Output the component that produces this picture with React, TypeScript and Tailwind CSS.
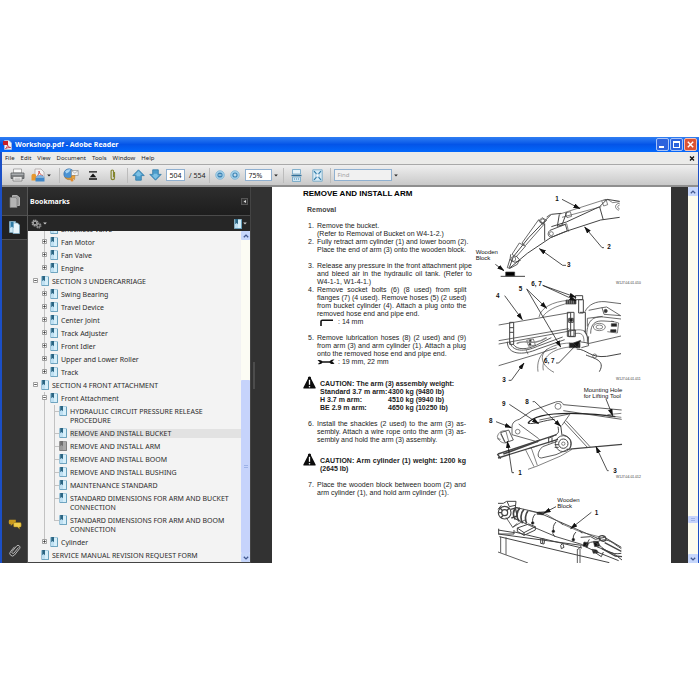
import type { ReactNode } from 'react';
import clsx from 'clsx';

type Row = {
  level: 0 | 1 | 2;
  label: string;
  state?: 'open' | 'closed';
  selected?: boolean;
  visited?: boolean;
  last?: boolean;
};

const rows: Row[] = [
  { level: 1, label: 'Shockless Valve' },
  { level: 1, label: 'Fan Motor', state: 'closed' },
  { level: 1, label: 'Fan Valve', state: 'closed' },
  { level: 1, label: 'Engine', state: 'closed', last: true },
  { level: 0, label: 'SECTION 3 UNDERCARRIAGE', state: 'open' },
  { level: 1, label: 'Swing Bearing', state: 'closed' },
  { level: 1, label: 'Travel Device', state: 'closed' },
  { level: 1, label: 'Center Joint', state: 'closed' },
  { level: 1, label: 'Track Adjuster', state: 'closed' },
  { level: 1, label: 'Front Idler', state: 'closed' },
  { level: 1, label: 'Upper and Lower Roller', state: 'closed' },
  { level: 1, label: 'Track', state: 'closed', last: true },
  { level: 0, label: 'SECTION 4 FRONT ATTACHMENT', state: 'open' },
  { level: 1, label: 'Front Attachment', state: 'open' },
  { level: 2, label: 'HYDRAULIC CIRCUIT PRESSURE RELEASE PROCEDURE' },
  { level: 2, label: 'REMOVE AND INSTALL BUCKET', selected: true },
  { level: 2, label: 'REMOVE AND INSTALL ARM', visited: true },
  { level: 2, label: 'REMOVE AND INSTALL BOOM' },
  { level: 2, label: 'REMOVE AND INSTALL BUSHING' },
  { level: 2, label: 'MAINTENANCE STANDARD' },
  { level: 2, label: 'STANDARD DIMENSIONS FOR ARM AND BUCKET CONNECTION' },
  { level: 2, label: 'STANDARD DIMENSIONS FOR ARM AND BOOM CONNECTION', last: true },
  { level: 1, label: 'Cylinder', state: 'closed', last: true },
  { level: 0, label: 'SERVICE MANUAL REVISION REQUEST FORM' },
];

const menus = ['File', 'Edit', 'View', 'Document', 'Tools', 'Window', 'Help'];

/* ---------- icons ---------- */

function PdfIcon() {
  return (
    <svg width="9" height="10" viewBox="0 0 9 10">
      <path d="M1.500 .5h4.500l2.500 2.500v6.500h-7z" fill="#f4f4f8" stroke="#b9c4dd" strokeWidth=".6" />
      <path d="M0 1h5v4H0z" fill="#c8202a" />
      <path d="M2.500 8.500c1.500-1 2-2.500 2-4 .5 2 1.500 2.800 3.200 3-2 0-3.700.2-5.200 1z" fill="none" stroke="#c8202a" strokeWidth=".8" />
    </svg>
  );
}

function BookmarkIcon({ visited = false }: { visited?: boolean }) {
  return (
    <svg width="8" height="10" viewBox="0 0 8 10" className="shrink-0">
      <path d="M.5.5h7v9h-7z" fill={visited ? '#9b9b9b' : '#bfe0f2'} stroke={visited ? '#8a8a8a' : '#8db9cf'} strokeWidth=".8" />
      <path d="M4 .8h3.200v8.400H4z" fill={visited ? '#a9a9a9' : '#d6effa'} />
      <path d="M1.200 0h2.800v5.200L2.600 4 1.200 5.200z" fill={visited ? '#6e6e6e' : '#2a6583'} />
      <path d="M7.500 1v8.600H1" fill="none" stroke={visited ? '#777' : '#5b97b5'} strokeWidth=".8" />
    </svg>
  );
}

function Expander({ open }: { open: boolean }) {
  return (
    <svg width="5" height="5" viewBox="0 0 5 5" className="block">
      <path d="M.5.5h4v4h-4z" fill="#fff" stroke="#8c8c8c" strokeWidth=".8" />
      <path d={open ? 'M1.200 2.500h2.600' : 'M1.200 2.500h2.600M2.500 1.200v2.600'} stroke="#333" strokeWidth=".8" />
    </svg>
  );
}

function Caret({ light = false }: { light?: boolean }) {
  return (
    <svg width="4" height="3" viewBox="0 0 4 3" className="shrink-0">
      <path d="M.2.5h3.600L2 2.600z" fill={light ? '#d0d0d0' : '#222'} />
    </svg>
  );
}

function PrinterIcon() {
  return (
    <svg width="15" height="14" viewBox="0 0 15 14">
      <path d="M3.500 1h8v4h-8z" fill="#fafafa" stroke="#8c8c8c" strokeWidth=".7" />
      <path d="M1 5h13v5.500H1z" fill="#7d8083" stroke="#56595c" strokeWidth=".8" />
      <path d="M1.500 5.500h12v1.500h-12z" fill="#a9acae" />
      <path d="M3 8.500h9v4.500H3z" fill="#f2f2f2" stroke="#6f6f6f" strokeWidth=".7" />
      <path d="M4.500 10.200h6M4.500 11.600h6" stroke="#9a9a9a" strokeWidth=".6" />
    </svg>
  );
}

function ShareIcon() {
  return (
    <svg width="14" height="14" viewBox="0 0 14 14">
      <path d="M4 1h6l3 3v6H4z" fill="#f5f3f3" stroke="#a39c9c" strokeWidth=".7" />
      <path d="M5.500 8.500c2-1.500 2.500-3 2.500-5.500.6 3 1.700 4 4 4.500-2.500 0-4.500.2-6.500 1z" fill="none" stroke="#cf4a3c" strokeWidth=".9" />
      <path d="M.5 12.500V7.800c0-1.200.9-2 2.300-2s2.400.8 2.400 2v4.700z" fill="#e6982f" />
      <path d="M4.500 9.500h9v4h-9z" fill="#3f86c8" />
      <path d="M5 9.500c.5-1.800 1.800-2.500 4-2.500s3.700.7 4.300 2.500z" fill="#7eb3e2" />
    </svg>
  );
}

function GlobeIcon() {
  return (
    <svg width="16" height="14" viewBox="0 0 16 14">
      <circle cx="6" cy="6" r="5.200" fill="#4b93d3" stroke="#2f6aa4" strokeWidth=".6" />
      <path d="M2 3.500c2-2 4-2.500 5.500-2L6 4 3.500 5.500z" fill="#a8d4f2" />
      <path d="M8.500 2.500h6.700v5H8.500z" fill="#f2f2f2" stroke="#8e8e8e" strokeWidth=".7" />
      <path d="m8.500 2.500 3.400 2.800 3.300-2.800" fill="none" stroke="#8e8e8e" strokeWidth=".6" />
      <path d="M2 9.500c2 2.500 5 3 8 .5l1.500 1.500.5-4-4 .5 1 1C7 10.500 4.500 10.500 2 9.500z" fill="#f0a63a" stroke="#b9721a" strokeWidth=".5" />
      <circle cx="9" cy="12" r="1.500" fill="#e28a2b" />
    </svg>
  );
}

function UploadIcon() {
  return (
    <svg width="10" height="9" viewBox="0 0 10 9">
      <path d="M1 .8h8M1 8h8" stroke="#111" strokeWidth="1.300" />
      <path d="M5 2.400 8.300 6.300H1.700z" fill="#111" />
    </svg>
  );
}

function ClipIcon({ tone }: { tone: 'olive' | 'grey' }) {
  const stroke = tone === 'olive' ? '#84862f' : '#b9b9b9';
  return (
    <svg width="12" height="14" viewBox="0 0 12 14">
      {tone === 'olive' ? (
        <path d="M7.500 4v6a1.700 1.700 0 0 1-3.400 0V3.200a1.200 1.200 0 0 1 2.400 0v6" fill="none" stroke={stroke} strokeWidth="1.200" />
      ) : (
        <path d="M9.500 4.500 5 10a1.200 1.200 0 0 1-1.900-1.500L7.800 2.800a2 2 0 0 1 3 2.500L5.500 12A2.600 2.600 0 0 1 1.400 8.700L5.500 3.800" fill="none" stroke={stroke} />
      )}
    </svg>
  );
}

function ArrowIcon({ down = false }: { down?: boolean }) {
  return (
    <svg width="13" height="12" viewBox="0 0 13 12" className={clsx(down && 'rotate-180')}>
      <path d="M6.500.8 12.200 6.600H9.300v4.600H3.700V6.600H.8z" fill="#4b9ccb" stroke="#2f7aa8" strokeWidth=".8" />
      <path d="M6.500 2 10 5.800H8.400v1.400H4.600V5.800H3z" fill="#7cc0e4" />
    </svg>
  );
}

function ZoomIcon({ plus = false }: { plus?: boolean }) {
  return (
    <svg width="10" height="10" viewBox="0 0 10 10">
      <circle cx="5" cy="5" r="4.300" fill="#a5d2ec" stroke="#7db2d2" strokeWidth=".8" />
      <circle cx="5" cy="5" r="2.600" fill="#3d84b4" />
      <path d={plus ? 'M3.500 5h3M5 3.500v3' : 'M3.500 5h3'} stroke="#fff" strokeWidth=".9" />
    </svg>
  );
}

function ScrollModeIcon() {
  return (
    <svg width="11" height="13" viewBox="0 0 11 13">
      <path d="M1.500.5h8v4.500h-8z" fill="#e6f3fa" stroke="#6aa2c4" strokeWidth=".8" />
      <path d="M.5 6.500h10" stroke="#2f6f9a" strokeWidth="1.400" />
      <path d="M1.500 8h8v4.500h-8z" fill="#cfe6f3" stroke="#6aa2c4" strokeWidth=".8" />
      <path d="M3 10h5" stroke="#3d84b4" strokeDasharray="1 1" />
    </svg>
  );
}

function FitPageIcon() {
  return (
    <svg width="11" height="13" viewBox="0 0 11 13">
      <path d="M.8.8h9.400v11.400H.8z" fill="#d7ebf6" stroke="#6aa2c4" strokeWidth=".8" />
      <path d="m2 2.200 2.500 2.700M9 2.200 6.500 4.900M2 10.800l2.500-2.700M9 10.800 6.500 8.100" stroke="#2f7aa8" strokeWidth="1.200" />
      <path d="M4 5h3v3H4z" fill="#fff" stroke="#6aa2c4" strokeWidth=".5" />
    </svg>
  );
}

function PagesIcon() {
  return (
    <svg width="11" height="13" viewBox="0 0 11 13">
      <path d="M3.500.5h4.500l2.500 2v8h-7z" fill="#9c9c9c" stroke="#d2d2d2" strokeWidth=".7" />
      <path d="M1 2.500h5.500l1.500 1.500v8.500H1z" fill="#b4b4b4" stroke="#7c7c7c" strokeWidth=".7" />
    </svg>
  );
}

function BookmarkTabIcon() {
  return (
    <svg width="11" height="13" viewBox="0 0 11 13">
      <path d="M.5.5h6v11h-6z" fill="#cfe8f5" stroke="#7fb2cc" strokeWidth=".7" />
      <path d="M4 2h4.500l2 2v8.500H4z" fill="#e8f5fb" stroke="#7fb2cc" strokeWidth=".7" />
      <path d="M1.500 1h3v6L3 5.500 1.500 7z" fill="#2d7ba6" />
    </svg>
  );
}

function CommentsIcon() {
  return (
    <svg width="14" height="11" viewBox="0 0 14 11">
      <path d="M1.500.8h6.300v4.400H4.500L2.800 7V5.200H1.500c-1 0-1-4.400 0-4.400z" fill="#c99a1f" />
      <path d="M6.300 3.500h6.200c1 0 1 4.600 0 4.600h-1l.2 2.200-2.200-2.200H6.300c-1 0-1-4.600 0-4.600z" fill="#f0cd4a" stroke="#8a6a12" strokeWidth=".5" />
    </svg>
  );
}

function GearIcon() {
  return (
    <svg width="11" height="10" viewBox="0 0 11 10">
      <circle cx="4" cy="4" r="2.600" fill="none" stroke="#9a9a9a" strokeWidth="1.800" strokeDasharray="1.400 .6" />
      <circle cx="4" cy="4" r="1.900" fill="none" stroke="#b5b5b5" />
      <circle cx="7.500" cy="6.500" r="2.200" fill="none" stroke="#8c8c8c" strokeWidth="1.600" strokeDasharray="1.200 .6" />
      <circle cx="7.500" cy="6.500" r="1.400" fill="none" stroke="#a8a8a8" strokeWidth=".8" />
    </svg>
  );
}

function WarningIcon() {
  return (
    <svg width="13" height="13" viewBox="0 0 13 13" className="shrink-0">
      <path d="M6.500.6c1.100 0 1.700.7 1.500 1.800L12.600 11.500c.3.700 0 1.100-.7 1.100H1.100c-.7 0-1-.4-.7-1.100L5 2.400C4.800 1.300 5.400.6 6.500.6z" fill="#0c0c0c" />
      <path d="M6.500 3.800v5" stroke="#fff" strokeWidth="1.300" />
      <circle cx="6.500" cy="10.700" r=".8" fill="#fff" />
    </svg>
  );
}

/* ---------- window chrome ---------- */

function TitleBar() {
  return (
    <header className="flex h-[15px] shrink-0 items-center bg-gradient-to-b from-[#2f7ef2] via-[#0454e8] to-[#0468fb] pr-[2px] pl-[3px]">
      <PdfIcon />
      <h1 className="ml-[3px] text-[7px] leading-[10px] font-bold whitespace-nowrap text-white">Workshop.pdf - Adobe Reader</h1>
      <div className="ml-auto flex gap-[1px]">
        <button aria-label="Minimize" className="flex h-[13px] w-[13px] items-end rounded-[2px] border border-[#a9c4f7] bg-[#2d63dd] p-[2px]">
          <span className="h-[2px] w-[5px] bg-white" />
        </button>
        <button aria-label="Restore" className="flex h-[13px] w-[13px] items-center justify-center rounded-[2px] border border-[#a9c4f7] bg-[#2d63dd]">
          <span className="h-[7px] w-[7px] border border-t-2 border-white" />
        </button>
        <button aria-label="Close" className="flex h-[13px] w-[13px] items-center justify-center rounded-[2px] border border-[#f3c0b3] bg-[#dc5233]">
          <svg width="7" height="7" viewBox="0 0 7 7">
            <path d="m.8.8 5.400 5.400M6.200.8.8 6.200" stroke="#fff" strokeWidth="1.400" />
          </svg>
        </button>
      </div>
    </header>
  );
}

function MenuBar() {
  return (
    <nav className="flex h-[13px] shrink-0 items-center gap-[6px] border-b border-[#a9a9a9] bg-[#ebebe9] px-[3px] text-[6px] leading-[8px] text-[#1a1a1a]">
      {menus.map((m) => (
        <button key={m}>{m}</button>
      ))}
      <button aria-label="Close document" className="ml-auto">
        <svg width="6" height="5" viewBox="0 0 6 5">
          <path d="m1 .5 4 4M5 .5l-4 4" stroke="#111" strokeWidth="1.300" />
        </svg>
      </button>
    </nav>
  );
}

function Tool({ label, children }: { label: string; children: ReactNode }) {
  return (
    <button aria-label={label} className="flex shrink-0 items-center gap-[2px]">
      {children}
    </button>
  );
}

function Separator() {
  return <span className="h-[15px] w-px shrink-0 bg-[#bcbcbc]" />;
}

function Toolbar() {
  return (
    <div className="flex h-[22px] shrink-0 items-center border-b-2 border-[#8f8f8f] bg-gradient-to-b from-[#efefef] to-[#c9c9c9] text-[7px] leading-[9px] text-[#222]">
      <div className="flex items-center gap-[6px] px-[8px]">
        <Tool label="Print"><PrinterIcon /></Tool>
        <Tool label="Collaborate"><ShareIcon /><Caret /></Tool>
      </div>
      <Separator />
      <div className="flex items-center gap-[9px] pr-[8px] pl-[3px]">
        <Tool label="Send"><GlobeIcon /></Tool>
        <Tool label="Upload"><UploadIcon /></Tool>
        <Tool label="Attach"><ClipIcon tone="olive" /></Tool>
      </div>
      <Separator />
      <div className="flex items-center gap-[4px] px-[4px]">
        <Tool label="Previous page"><ArrowIcon /></Tool>
        <Tool label="Next page"><ArrowIcon down /></Tool>
        <input aria-label="Page number" defaultValue="504" className="h-[12px] w-[19px] border border-[#8fb0d0] bg-white text-center" />
        <span className="whitespace-nowrap">/ 554</span>
      </div>
      <Separator />
      <div className="flex items-center gap-[5px] px-[5px]">
        <Tool label="Zoom out"><ZoomIcon /></Tool>
        <Tool label="Zoom in"><ZoomIcon plus /></Tool>
        <div className="flex items-center gap-[2px]">
          <select aria-label="Zoom level" defaultValue="75%" className="h-[12px] w-[27px] appearance-none border border-[#8fb0d0] bg-white pl-[2px]">
            <option>75%</option>
          </select>
          <Caret />
        </div>
      </div>
      <Separator />
      <div className="flex items-center gap-[10px] px-[7px]">
        <Tool label="Scrolling pages"><ScrollModeIcon /></Tool>
        <Tool label="One full page"><FitPageIcon /></Tool>
      </div>
      <Separator />
      <div className="flex items-center gap-[2px] pl-[3px]">
        <input aria-label="Find" placeholder="Find" className="h-[12px] w-[58px] border border-[#8fb0d0] bg-[#f1f1f1] px-[2px] text-[6px] placeholder:text-[#a3a3a3]" />
        <Caret />
      </div>
    </div>
  );
}

function ScrollArrow({ down = false }: { down?: boolean }) {
  return (
    <button aria-label={down ? 'Scroll down' : 'Scroll up'} className="flex h-[9px] w-full shrink-0 items-center justify-center rounded-[1px] bg-[#c6d6fb]">
      <svg width="6" height="4" viewBox="0 0 6 4" className={clsx(down && 'rotate-180')}>
        <path d="m.8 3.300 2.200-2.200 2.200 2.200" fill="none" stroke="#42588f" strokeWidth="1.300" />
      </svg>
    </button>
  );
}

/* ---------- bookmarks ---------- */

function TreeRow({ row }: { row: Row }) {
  return (
    <li
      className={clsx(
        'relative flex shrink-0 items-start py-[2px]',
        row.level === 0 && 'pl-[5px]',
        row.level === 1 && 'pl-[14px]',
        row.level === 2 && 'pl-[31px]',
      )}
    >
      {row.level > 0 && (
        <span className={clsx('absolute top-0 left-[16px] w-px bg-[#c2c2c2]', row.level === 1 && row.last ? 'h-[6px]' : 'bottom-0')} />
      )}
      {row.level === 2 && (
        <>
          <span className={clsx('absolute top-0 left-[26px] w-px bg-[#c2c2c2]', row.last ? 'h-[6px]' : 'bottom-0')} />
          <span className="absolute top-[6px] left-[26px] h-px w-[5px] bg-[#c2c2c2]" />
        </>
      )}
      {row.level < 2 && (
        <span className="relative mt-[1px] mr-[3px] h-[5px] w-[5px] shrink-0">
          {row.state && <Expander open={row.state === 'open'} />}
        </span>
      )}
      <span className="-mt-px">
        <BookmarkIcon visited={row.visited} />
      </span>
      <a href="#page" className={clsx('ml-[3px] flex-1', row.selected && 'bg-[#e2e2e2]')}>
        {row.label}
      </a>
    </li>
  );
}

function Bookmarks() {
  return (
    <aside className="flex w-[223px] shrink-0 flex-col border-l border-[#555] bg-[#262626]">
      <div className="flex h-[29px] shrink-0 items-center justify-between border-b border-[#4a4a4a] bg-gradient-to-b from-[#2e2e2e] to-[#1d1d1d] pr-[2px] pl-[2px]">
        <h2 className="text-[7px] leading-[9px] font-bold text-white">Bookmarks</h2>
        <button aria-label="Collapse panel" className="flex h-[7px] w-[7px] items-center justify-center border border-[#555] bg-[#333]">
          <svg width="3" height="3" viewBox="0 0 3 3"><path d="M3 0v3L.5 1.500z" fill="#ddd" /></svg>
        </button>
      </div>
      <div className="flex h-[15px] shrink-0 items-center justify-between px-[3px]">
        <button aria-label="Options" className="flex items-center gap-[1px]"><GearIcon /><Caret light /></button>
        <button aria-label="New bookmark" className="flex items-center gap-[1px]"><BookmarkIcon /><Caret light /></button>
      </div>
      <div className="flex min-h-0 flex-1 border-b border-[#444] bg-[#f3f3f3]">
        <ul className="flex min-w-0 flex-1 flex-col justify-end overflow-hidden text-[7px] leading-[9px] text-[#2b2b2b]">
          {rows.map((row) => (
            <TreeRow key={row.label} row={row} />
          ))}
        </ul>
        <div className="flex w-[9px] shrink-0 flex-col bg-[#fcfcf4]">
          <ScrollArrow />
          <span className="flex-[140]" />
          <span className="flex flex-[172] items-center justify-center rounded-[1px] bg-[#c6d3fb]">
            <span className="h-[3px] w-[4px] border-y border-[#9db2e8]" />
          </span>
          <ScrollArrow down />
        </div>
      </div>
    </aside>
  );
}

function NavStrip() {
  return (
    <div className="flex w-[25px] shrink-0 flex-col items-center bg-[#343434]">
      <button aria-label="Pages" className="flex h-[28px] items-center"><PagesIcon /></button>
      <button aria-label="Bookmarks" className="flex h-[25px] w-full items-center justify-center border-y border-[#505050] bg-[#222]"><BookmarkTabIcon /></button>
      <button aria-label="Comments" className="mt-auto mb-[13px]"><CommentsIcon /></button>
      <button aria-label="Attachments" className="mb-[6px]"><ClipIcon tone="grey" /></button>
    </div>
  );
}

/* ---------- document ---------- */

function Step({ n, lines, children }: { n: number; lines: string[]; children?: ReactNode }) {
  return (
    <div className="flex">
      <span className="w-[9px] shrink-0">{n}.</span>
      <div className="flex-1">
        {lines.map((line, i) => (
          <p key={line} className={clsx('whitespace-nowrap', i < lines.length - 1 && '[text-align-last:justify]')}>
            {line}
          </p>
        ))}
        {children}
      </div>
    </div>
  );
}

function PageText() {
  return (
    <article className="w-[163px] shrink-0 pt-[2px] text-[7px] leading-[8px] text-[#222]">
      <h2 className="text-[8px] leading-[9px] font-bold whitespace-nowrap text-black">REMOVE AND INSTALL ARM</h2>
      <h3 className="mt-[8px] ml-[4px] font-bold text-[#444]">Removal</h3>
      <div className="mt-[8px] ml-[5px]">
        <Step n={1} lines={['Remove the bucket.']}>
          <p className="whitespace-nowrap">(Refer to Removal of Bucket on W4-1-2.)</p>
        </Step>
        <Step n={2} lines={['Fully retract arm cylinder (1) and lower boom (2).', 'Place the end of arm (3) onto the wooden block.']} />
        <div className="h-2" />
        <Step n={3} lines={['Release any pressure in the front attachment pipe', 'and bleed air in the hydraulic oil tank. (Refer to', 'W4-1-1, W1-4-1.)']} />
        <Step n={4} lines={['Remove socket bolts (6) (8 used) from split', 'flanges (7) (4 used). Remove hoses (5) (2 used)', 'from bucket cylinder (4). Attach a plug onto the', 'removed hose end and pipe end.']}>
          <p className="flex items-center gap-[4px] pl-[3px]">
            <svg width="14" height="7" viewBox="0 0 14 7"><path d="M1 7V2.500Q1 1.200 2.300 1.200H13" fill="none" stroke="#111" strokeWidth="1.600" /></svg>
            : 14 mm
          </p>
        </Step>
        <div className="h-2" />
        <Step n={5} lines={['Remove lubrication hoses (8) (2 used) and (9)', 'from arm (3) and arm cylinder (1). Attach a plug', 'onto the removed hose end and pipe end.']}>
          <p className="flex items-center gap-[3px]">
            <svg width="18" height="6" viewBox="0 0 18 6">
              <path d="M3 3h12" stroke="#111" strokeWidth="1.500" />
              <path d="M.5 1.200C3 .5 5 1 5.500 3 5 5 3 5.500.8 5L3 3.200zM17.500.6 15.200 2.600l2.300 1.800c-2 1.200-4.500.8-5-1.400.4-2.200 2.800-3 5-2.400z" fill="#111" />
            </svg>
            : 19 mm, 22 mm
          </p>
        </Step>
      </div>
      <div className="mt-[10px] flex items-start gap-[4px] font-bold">
        <WarningIcon />
        <table className="mt-[4px] border-collapse whitespace-nowrap">
          <tbody>
            <tr><td colSpan={2} className="p-0">CAUTION: The arm (3) assembly weight:</td></tr>
            <tr><td className="w-[68px] p-0">Standard 3.7 m arm:</td><td className="p-0">4300 kg (9480 lb)</td></tr>
            <tr><td className="p-0">H 3.7 m arm:</td><td className="p-0">4510 kg (9940 lb)</td></tr>
            <tr><td className="p-0">BE 2.9 m arm:</td><td className="p-0">4650 kg (10250 lb)</td></tr>
          </tbody>
        </table>
      </div>
      <div className="mt-[8px] ml-[5px]">
        <Step n={6} lines={['Install the shackles (2 used) to the arm (3) as-', 'sembly. Attach a wire rope onto the arm (3) as-', 'sembly and hold the arm (3) assembly.']} />
      </div>
      <div className="mt-[9px] flex items-start gap-[4px] font-bold">
        <WarningIcon />
        <div className="mt-[4px] flex-1 whitespace-nowrap">
          <p className="[text-align-last:justify]">CAUTION: Arm cylinder (1) weight: 1200 kg</p>
          <p>(2645 lb)</p>
        </div>
      </div>
      <div className="mt-[8px] ml-[5px]">
        <Step n={7} lines={['Place the wooden block between boom (2) and', 'arm cylinder (1), and hold arm cylinder (1).']} />
      </div>
    </article>
  );
}

function Leaders({ d }: { d: string[] }) {
  return (
    <>
      {d.map((p) => (
        <path key={p} d={p} stroke="#111" strokeWidth="2.200" markerEnd="url(#head)" />
      ))}
    </>
  );
}

function Label({ x, y, children }: { x: number; y: number; children: ReactNode }) {
  return (
    <text x={x} y={y} fontSize="19" fontWeight="bold" fill="#111" stroke="none">
      {children}
    </text>
  );
}

function Note({ x, y, children }: { x: number; y: number; children: ReactNode }) {
  return (
    <text x={x} y={y} fontSize="18" fill="#111" stroke="none">
      {children}
    </text>
  );
}

function Code({ y, children }: { y: number; children: ReactNode }) {
  return (
    <text x="438" y={y} fontSize="10" fill="#333" stroke="none">
      {children}
    </text>
  );
}

const figure = 'block shrink-0 overflow-visible fill-none stroke-[#444]';

function FigureArm() {
  return (
    <svg width="200" height="89" viewBox="0 15 600 267" strokeWidth="2" className={figure}>
      <defs>
        <marker id="head" markerUnits="userSpaceOnUse" markerWidth="22" markerHeight="14" refX="20" refY="7" orient="auto">
          <path d="M0 0 22 7 0 14z" fill="#111" stroke="none" />
        </marker>
      </defs>
      <path d="M118 250 172 205 242 158 285 140 392 105 449 97M449 49l-38-6-22 22-100 46-45 14M389 66l11 39" strokeWidth="3" />
      <path d="M118 248 130 215 176 158 224 108 244 88l30-3M224 115v52M268 88l-6 36 14-4 14-38" strokeWidth="3" />
      <path d="m270 87 125-40M276 97l118-32M286 84l5 14 14-4-4-14zM395 47l6 16 12-4-5-16z" />
      <path d="m400 46 14-2 14 9 21-3M449 55c-14 0-18 16-2 21M449 60c-8 2-7 10 0 12" />
      <path d="m206 104-50 70 10 8 56-64zM216 98l-10 10 12 10 12-12zM230 96l12-8M148 174l-22 34 12 8 28-32z" strokeWidth="2.400" />
      <circle cx="218" cy="108" r="6" />
      <circle cx="130" cy="222" r="7" />
      <path d="M138 212l10 12-6 14-22 12-8-2 8-26M122 208l-2 16 14 8 18-6" strokeWidth="2.600" />
      <path d="m240 136 46-18 6 20-46 18c-14 2-14-14-6-20z" strokeWidth="2.800" />
      <circle cx="244" cy="146" r="6" />
      <path d="m272 123 18-7 6 24" />
      <path d="M107 261h27v12h-27z" fill="#000" />
      <path d="M92 274h73" strokeWidth="3" />
      <Leaders d={['M276 43l54 28', 'M402 188h-6l-52-62', 'M288 241h-10l-70-50', 'M76 238l26 19']} />
      <Label x={256} y={48}>1</Label>
      <Label x={412} y={193}>2</Label>
      <Label x={291} y={247}>3</Label>
      <Note x={17} y={207}>Wooden</Note>
      <Note x={17} y={224}>Block</Note>
      <Code y={297}>W1J7-04-01-010</Code>
    </svg>
  );
}

function FigureHoses() {
  return (
    <svg width="200" height="106" viewBox="0 12 600 318" strokeWidth="2" className={figure}>
      <path d="M86 150 300 113M86 197l210-36M86 207l230-42M86 272l114-34 60-20M350 207l103-24M345 110c10-22 34-32 60-30l48 6" strokeWidth="2.400" />
      <path d="M207 126c6-28 40-46 88-50M218 126c10-18 40-34 80-42" />
      <path d="M288 75h30v12h-30z" fill="#333" />
      <path d="M292 76v10M298 76v10M304 76v10M310 76v10" stroke="#aaa" />
      <path d="M316 62h22v12h-22zM326 74h14v40h-14zM330 112h16v60" strokeWidth="3" />
      <path d="M292 112h20v72h-20zM302 112v72M296 130h14v12h-14zM296 165h20v20h-20z" strokeWidth="3" />
      <circle cx="303" cy="135" r="5" fill="#222" />
      <path d="M119 142h12v66h-12zM119 158h12M119 172h12" strokeWidth="3" />
      <path d="M112 200c0 40 46 42 92 22l80-28M120 200c4 30 44 32 82 14l76-28M130 208c10 18 44 16 70 2l44-22" strokeWidth="2.600" />
      <path d="M170 196l20-4 6 18-20 4zM168 224l6 14" />
      <circle cx="181" cy="198" r="3" fill="#222" />
      <circle cx="180" cy="208" r="3" fill="#222" />
      <path d="M140 206c20-16 50 10 90-18" stroke="#888" strokeWidth="4" />
      <path d="M298 204h32v14h-32z" fill="#222" />
      <path d="M300 204c-60 2-104 30-96 86M300 216c-50 4-88 30-80 70M232 222c-26 20-18 50 20 70" />
      <path d="M328 200l26 4 2-20M334 218l22-6-4-28-10-18" strokeWidth="2.600" />
      <path d="M312 166c30-6 42 4 40 34M314 176c20-4 28 2 28 24" />
      <path d="M320 222c30 0 40 28 90 22l43-8" strokeWidth="3" />
      <path d="M348 240c24 10 60 16 40 50" strokeWidth="3" />
      <circle cx="374" cy="243" r="6" />
      <path d="M350 180c2-46 20-56 50-54l53 6M362 176c0-30 14-40 40-38l30 2M352 154v-24l46-6M396 98l6 20 50 4M356 106l40-8 14-2 42 26" strokeWidth="2.400" />
      <ellipse cx="388" cy="156" rx="18" ry="11" />
      <ellipse cx="388" cy="156" rx="10" ry="6" />
      <circle cx="407" cy="108" r="5" fill="#333" />
      <path d="M424 146h16v8h-16zM422 164h16v7h-16z" fill="#222" />
      <path d="M412 170l30 4 4-30-22-6" />
      <Leaders
        d={['M218 31l100 36', 'M218 31l100 46', 'M170 42l60 58', 'M170 42l102 174', 'M104 62l53 72', 'M116 316h8l38-52', 'M258 264h8l62-64']}
      />
      <path d="m332 196-22 8 12 14z" fill="#111" />
      <Label x={184} y={33}>6, 7</Label>
      <Label x={146} y={48}>5</Label>
      <Label x={78} y={69}>4</Label>
      <Label x={222} y={265}>6, 7</Label>
      <Label x={97} y={321}>3</Label>
      <Code y={314}>W1J7-04-01-011</Code>
    </svg>
  );
}

function FigureMounting() {
  return (
    <svg width="200" height="105" viewBox="0 15 600 315" strokeWidth="2" className={figure}>
      <path d="M126 142c0-14 8-20 22-24l38-26 66-24c14-6 24-4 28 6l175 16M280 92l175 26" strokeWidth="2.600" />
      <circle cx="264" cy="79" r="9" />
      <circle cx="143" cy="155" r="7" />
      <path d="M126 142v22l78 22M146 132l60 44M208 120l90-18M300 102l-24 34M288 122l72 78M282 126l72 78" strokeWidth="2.400" />
      <path d="M174 130c20-30 100-36 232-24l30 4" strokeWidth="4" stroke="#222" />
      <path d="M174 130c20 4 50-10 80-12" strokeWidth="3" />
      <path d="m290 208 166-15" strokeWidth="4" />
      <path d="M406 106l48 6M412 104l42-4" />
      <path d="M92 158l24-8 14 30-24 8z" strokeWidth="2.600" />
      <path d="M82 170c4-16 18-20 26-16l8 30c-12 10-28 4-34-14zM92 162l12 24M82 176l10 2" strokeWidth="2" />
      <path d="M84 222 260 164M84 234l180-56M82 222l10 14" strokeWidth="4" />
      <path d="M100 222l104-38M190 188l20-8" strokeWidth="5" />
      <path d="M218 200c-14 12-20 34-4 34l44-10 36-16M218 200l44-16" strokeWidth="2.600" />
      <circle cx="280" cy="191" r="24" strokeWidth="2.600" />
      <circle cx="280" cy="191" r="14" strokeWidth="3" />
      <circle cx="280" cy="191" r="5" />
      <path d="M272 136l4 30M264 140c4 20 0 20-10 26l-20 10M236 176v14M246 172v16M254 194h12M254 202h12" strokeWidth="3" />
      <path d="M166 208l26 52M184 204l18 52M174 268l28-10 70-30 34-20M176 206l24-8" />
      <path d="M300 204c8-22-2-34-22-40" strokeWidth="3" />
      <Leaders d={['M188 65h6l78 74', 'M118 73l88 58', 'M78 125l46 18', 'M132 278h-6l-14-94', 'M416 272h-4l-34-72', 'M408 57l20 50']} />
      <Label x={166} y={71}>8</Label>
      <Label x={96} y={79}>9</Label>
      <Label x={57} y={130}>8</Label>
      <Label x={145} y={285}>1</Label>
      <Label x={430} y={278}>3</Label>
      <Note x={341} y={37}>Mounting Hole</Note>
      <Note x={341} y={55}>for Lifting Tool</Note>
      <Code y={294}>W1J7-04-01-012</Code>
    </svg>
  );
}

function FigureCylinder() {
  return (
    <svg width="200" height="73" viewBox="0 30 600 219" strokeWidth="2" className="block shrink-0 overflow-hidden fill-none stroke-[#444]">
      <path d="M84 70h16l10-6h28l-2 18 14 4M84 88l10-12M112 66l6 14 18-4" strokeWidth="3" />
      <circle cx="104" cy="98" r="19" strokeWidth="3.500" />
      <circle cx="104" cy="98" r="9" strokeWidth="3.500" />
      <path d="M90 84l8 8M118 84l-8 8M92 114l8-8M86 98h10M122 88l14-4 6 24-18 6" strokeWidth="4" />
      <path d="M138 82c-10 10-10 28-2 36M150 84c-12 10-12 30-2 40M162 88c-10 10-12 30-4 42M174 92c-8 10-10 26-4 38" strokeWidth="5" />
      <path d="M136 82 206 98 330 152 390 178M134 116l44 20 80 34 80 24" strokeWidth="2.800" />
      <path d="M176 92l40 10M206 96l22 6 48 30 56 24 62 16" />
      <path d="M196 102c-8 8-10 18-7 28M258 126c-8 8-10 18-7 28M318 156c-8 8-10 16-7 24M272 126l6 8M330 152l6 8" strokeWidth="3" />
      <g fill="#111">
        <circle cx="188" cy="129" r="4" />
        <circle cx="250" cy="154" r="4" />
        <circle cx="310" cy="179" r="4" />
        <path d="M200 96l26-2-6 12-20-2z" stroke="none" opacity=".7" />
        <path d="M342 186l14 2-4 14-14-4zM370 184h14l6 14-16 2zM366 208l14 2 6 8-16 2z" />
      </g>
      <path d="M142 144l34-12 20 8-34 18zM142 144v10l20 12v-8M162 166l34-16v-10" strokeWidth="3" />
      <path d="M108 112l20 30 14-12M128 142l40-24" strokeWidth="2.600" />
      <path d="M84 150l50 8M84 162l250 34M86 146v16h46v-12M134 156 336 204M88 170l330 78M336 196l-14 14" strokeWidth="3" />
      <path d="M92 170v48M108 172v52M322 208v41M330 206v43M84 216l90 33" strokeWidth="2.600" />
      <path d="M218 174v16M212 176l12 2-2 14-10-2zM272 196l6-6 4 12-8 4zM248 160l6 10" strokeWidth="3" />
      <path d="M332 172l30-2 14 8 28-6 50 30M358 178l-12 22 30 14 70 28M390 176l-10 24 50 20 26 20M392 182c20-10 40 10 62 24M356 190c30-20 40 40 98 30M370 214l24 16 6-14" strokeWidth="3" />
      <path d="M386 172c6-8 20-6 22 4s-16 12-22-4M396 206l40 22 20 2M404 188l50 26" strokeWidth="4" />
      <Leaders d={['M258 80l-36 19', 'M364 97l-62 49']} />
      <Label x={374} y={105}>1</Label>
      <Note x={262} y={65}>Wooden</Note>
      <Note x={262} y={83}>Block</Note>
    </svg>
  );
}

function Viewer() {
  return (
    <main className="flex min-w-0 flex-1 bg-[#323232]">
      <div className="flex w-[22px] shrink-0 items-center border-l border-[#444] pl-[2px]">
        <span className="h-[27px] w-[2px] border-x border-[#4c4c4c]" />
      </div>
      <div id="page" className="flex min-w-0 flex-1 overflow-hidden bg-white pl-[31px] font-['Liberation_Sans',sans-serif]">
        <PageText />
        <div className="ml-[4px] flex min-w-0 flex-1 flex-col pt-[3px]">
          <FigureArm />
          <FigureHoses />
          <FigureMounting />
          <FigureCylinder />
        </div>
      </div>
      <div className="w-[17px] shrink-0" />
      <div className="flex w-[10px] shrink-0 flex-col bg-[#fcfbee]">
        <ScrollArrow />
        <span className="flex-[323]" />
        <span className="flex h-[7px] items-center justify-center rounded-[1px] bg-[#c6d3fb]">
          <span className="h-[3px] w-[4px] border-y border-[#9db2e8]" />
        </span>
        <span className="flex-[31]" />
        <ScrollArrow down />
      </div>
    </main>
  );
}

export default function App() {
  return (
    <div className="flex h-screen flex-col bg-white py-[137px] pr-[1px] font-['Noto_Sans','Open_Sans',sans-serif]">
      <div className="flex min-h-0 flex-1 flex-col overflow-hidden bg-[#0b50dc]">
        <TitleBar />
        <div className="flex min-h-0 flex-1 flex-col border-r border-l-2 border-[#1b4fc6]">
          <MenuBar />
          <Toolbar />
          <div className="flex min-h-0 flex-1">
            <NavStrip />
            <Bookmarks />
            <Viewer />
          </div>
        </div>
      </div>
    </div>
  );
}
